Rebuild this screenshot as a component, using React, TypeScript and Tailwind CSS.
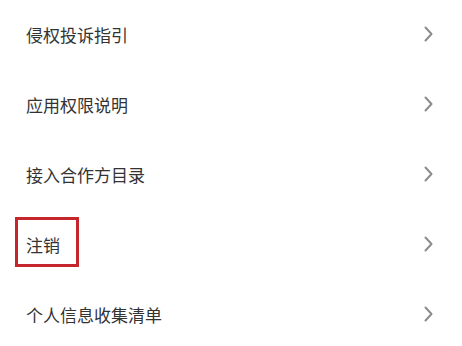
const items = ["侵权投诉指引", "应用权限说明", "接入合作方目录", "注销", "个人信息收集清单"];

function Chevron() {
  return (
    <svg width="9" height="16" viewBox="0 0 9 16" fill="none" className="shrink-0">
      <path d="M1.5 1.5L7.5 8L1.5 14.5" stroke="#8c8c8c" strokeWidth="2" strokeLinecap="round" strokeLinejoin="round" />
    </svg>
  );
}

export default function App() {
  return (
    <div
      className="h-[346px] w-[462px] overflow-hidden bg-white"
      style={{ fontFamily: '"Noto Sans CJK SC", "Noto Sans", sans-serif' }}
    >
      <ul className="-mt-px">
        {items.map((label) => (
          <li key={label} className="relative flex h-[70px] items-center justify-between pl-[26px] pr-[29px]">
            <span className="text-[17px] leading-none text-[#333333]">{label}</span>
            <Chevron />
            {/* 标注框 */}
            {label === "注销" && (
              <div className="pointer-events-none absolute left-[15px] top-[8px] h-[50px] w-[64px] border-[3px] border-[#c4262b]" />
            )}
          </li>
        ))}
      </ul>
    </div>
  );
}
